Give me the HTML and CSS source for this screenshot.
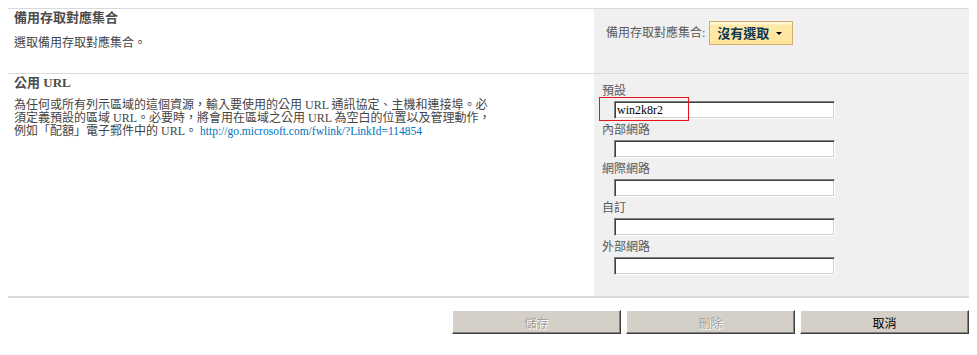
FILE: index.html
```html
<!DOCTYPE html>
<html lang="zh-Hant">
<head>
<meta charset="utf-8">
<title>備用存取對應</title>
<link rel="stylesheet" href="styles.css">
</head>
<body>
<div class="page">
  <div class="section s1">
    <div class="left">
      <h3 class="title">備用存取對應集合</h3>
      <div class="desc">選取備用存取對應集合。</div>
    </div>
    <div class="right">
      <div class="aam-row">
        <span class="aam-label">備用存取對應集合:</span>
        <button class="aam-btn" type="button">沒有選取<span class="caret"></span></button>
      </div>
    </div>
  </div>
  <div class="section s2">
    <div class="left">
      <h3 class="title">公用 URL</h3>
      <div class="para">為任何或所有列示區域的這個資源，輸入要使用的公用 URL 通訊協定、主機和連接埠。必須定義預設的區域 URL。必要時，將會用在區域之公用 URL 為空白的位置以及管理動作，例如「配額」電子郵件中的 URL。 <a class="link" href="#">http://go.microsoft.com/fwlink/?LinkId=114854</a></div>
    </div>
    <div class="right">
      <div class="field">
        <div class="field-label">預設</div>
        <div class="input-wrap">
          <input class="input" type="text" value="win2k8r2">
          <span class="highlight"></span>
        </div>
      </div>
      <div class="field">
        <div class="field-label">內部網路</div>
        <div class="input-wrap"><input class="input" type="text" value=""></div>
      </div>
      <div class="field">
        <div class="field-label">網際網路</div>
        <div class="input-wrap"><input class="input" type="text" value=""></div>
      </div>
      <div class="field">
        <div class="field-label">自訂</div>
        <div class="input-wrap"><input class="input" type="text" value=""></div>
      </div>
      <div class="field">
        <div class="field-label">外部網路</div>
        <div class="input-wrap"><input class="input" type="text" value=""></div>
      </div>
    </div>
  </div>
  <div class="actions">
    <button class="btn" type="button" disabled>儲存</button>
    <button class="btn" type="button" disabled>刪除</button>
    <button class="btn" type="button">取消</button>
  </div>
</div>
</body>
</html>
```
FILE: styles.css
```css
body {
  margin: 8px;
  font-family: "Liberation Serif", "Noto Sans CJK TC", serif;
  font-size: 12px;
  color: #444;
  background: #fff;
}

.page {
  border-top: 1px solid #dadada;
}

.section {
  display: grid;
  grid-template-columns: 586px 1fr;
}

.s1 {
  border-bottom: 1px solid #dadada;
}

.s2 {
  border-bottom: 2px solid #dadada;
}

.left {
  padding-left: 6px;
}

.right {
  background: #f0f0f0;
}

.title {
  margin: 0;
  padding-top: 2px;
  font-size: 13px;
  line-height: 14px;
  font-weight: bold;
  color: #4c4c4c;
}

.desc {
  margin-top: 11px;
  line-height: 14px;
}

.s1 .right {
  padding: 12px 0 28px 12px;
}

.aam-row {
  display: flex;
  align-items: center;
  gap: 4px;
}

.aam-label {
  color: #5a5a5a;
  line-height: 14px;
}

.aam-btn {
  display: inline-flex;
  align-items: center;
  gap: 7px;
  height: 24px;
  box-sizing: border-box;
  margin: 0;
  padding: 0 10px 0 7px;
  border: 1px solid #cfae6e;
  background: linear-gradient(#fff6d6 0, #fff6d6 2px, #ffeaa9 3px, #ffe49a 100%);
  font-family: "Noto Sans CJK TC", sans-serif;
  font-size: 13px;
  font-weight: bold;
  line-height: 14px;
  color: #0d3658;
}

.caret {
  width: 0;
  height: 0;
  border-left: 3px solid transparent;
  border-right: 3px solid transparent;
  border-top: 3px solid #000;
}

.para {
  margin-top: 9px;
  width: 480px;
  line-height: 13px;
}

.link {
  color: #0072bc;
  font-size: 11.5px;
  text-decoration: none;
}

.s2 .right {
  padding: 9px 0 21px 8px;
}

.field + .field {
  margin-top: 3px;
}

.field-label {
  line-height: 16px;
  color: #5a5a5a;
}

.input-wrap {
  position: relative;
  width: 221px;
  margin: 2px 0 0 12px;
}

.input {
  display: block;
  width: 221px;
  height: 18px;
  box-sizing: border-box;
  margin: 0;
  padding: 0 2px;
  border: 1px solid;
  border-color: #808080 #fff #fff #808080;
  box-shadow: inset 1px 1px 0 #404040, inset -1px -1px 0 #d4d0c8;
  background: #fff;
  font-family: "Liberation Serif", serif;
  font-size: 12px;
  color: #000;
  outline: none;
}

.highlight {
  position: absolute;
  left: -15px;
  top: -4px;
  width: 90px;
  height: 24px;
  box-sizing: border-box;
  border: 1px solid #e8141c;
  pointer-events: none;
}

.actions {
  display: flex;
  justify-content: flex-end;
  gap: 5px;
  margin-top: 12px;
}

.btn {
  width: 169px;
  height: 24px;
  box-sizing: border-box;
  margin: 0;
  padding: 0;
  background: #d4d0c8;
  border: 1px solid;
  border-color: #fff #404040 #404040 #fff;
  box-shadow: inset -1px -1px 0 #808080;
  font-family: "Noto Sans CJK TC", sans-serif;
  font-size: 12px;
  color: #000;
}

.btn:disabled {
  color: #a0a0a0;
  text-shadow: 1px 1px 0 #fff;
}
```
